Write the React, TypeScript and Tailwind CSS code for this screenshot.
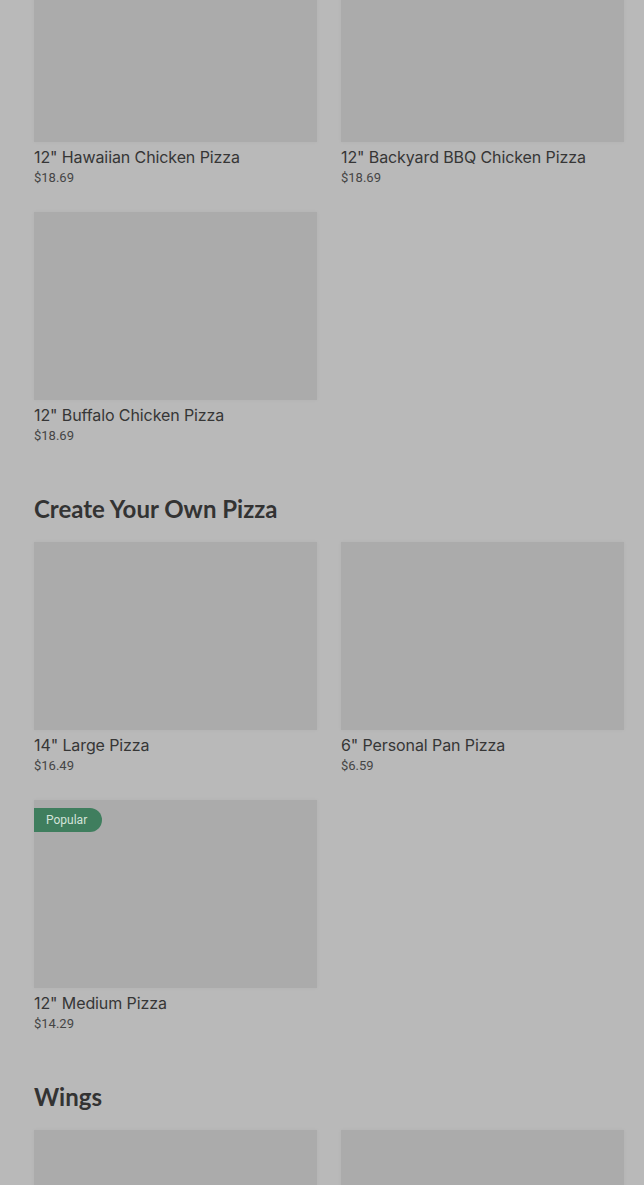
type Item = { name: string; price: string; popular?: boolean }

const sections: { title?: string; items: Item[] }[] = [
  {
    items: [
      { name: '12" Hawaiian Chicken Pizza', price: "$18.69" },
      { name: '12" Backyard BBQ Chicken Pizza', price: "$18.69" },
      { name: '12" Buffalo Chicken Pizza', price: "$18.69" },
    ],
  },
  {
    title: "Create Your Own Pizza",
    items: [
      { name: '14" Large Pizza', price: "$16.49" },
      { name: '6" Personal Pan Pizza', price: "$6.59" },
      { name: '12" Medium Pizza', price: "$14.29", popular: true },
    ],
  },
  {
    title: "Wings",
    // below the fold, only the tops of the photos show
    items: [
      { name: "", price: "" },
      { name: "", price: "" },
    ],
  },
]

function Card({ item }: { item: Item }) {
  return (
    <div className="flex flex-col h-[234px]">
      <div className="relative h-[188px] bg-[#ababab] shadow-[0_0_4px_rgba(0,0,0,0.04)]">
        {item.popular && (
          <span className="absolute left-0 top-2 h-6 w-[68px] flex items-center pl-3 rounded-r-full bg-[#3f7e5e] text-[12px] text-[#d3e3da]">
            Popular
          </span>
        )}
      </div>
      <div className="mt-[5px] h-5 text-[16px] leading-5 tracking-[-0.1px] text-[#363636] font-['Inter',sans-serif]">
        {item.name}
      </div>
      <div className="mt-px h-5 text-[13px] leading-5 text-[#454545]">{item.price}</div>
    </div>
  )
}

export default function App() {
  return (
    <div className="h-[1185px] bg-[#b9b9b9] overflow-hidden font-['Roboto',sans-serif]">
      <div className="-mt-[46px] pl-[34px] pr-5">
        {sections.map((s, i) => (
          <section key={i} className={s.title ? "pt-[47px]" : ""}>
            {s.title && (
              <h2 className="h-8 mb-[17px] text-[24px] leading-8 font-bold text-[#333333] font-['Lato',sans-serif]">
                {s.title}
              </h2>
            )}
            <div className="grid grid-cols-2 gap-x-6 gap-y-[24px]">
              {s.items.map((it, j) => (
                <Card key={j} item={it} />
              ))}
            </div>
          </section>
        ))}
      </div>
    </div>
  )
}
